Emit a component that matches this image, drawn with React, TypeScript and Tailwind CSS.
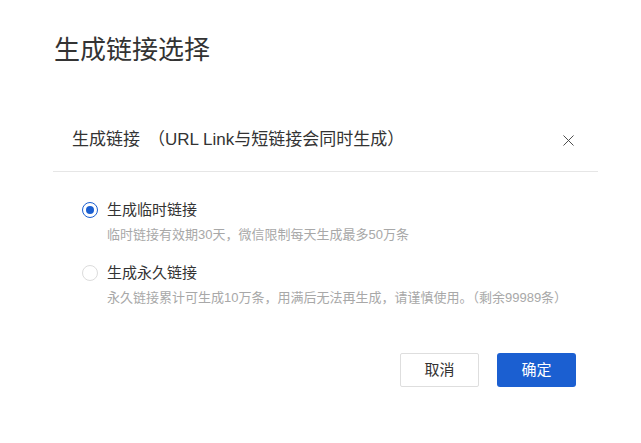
import { X } from "lucide-react";

const font = { fontFamily: '"Liberation Sans", "Noto Sans CJK SC", "Noto Sans", sans-serif' };

const options = [
  {
    label: "生成临时链接",
    desc: "临时链接有效期30天，微信限制每天生成最多50万条",
    checked: true,
  },
  {
    label: "生成永久链接",
    desc: "永久链接累计可生成10万条，用满后无法再生成，请谨慎使用。（剩余99989条）",
    checked: false,
  },
];

const App = () => {
  return (
    <main className="w-[641px] h-[443px] bg-white text-[#333] overflow-hidden" style={font}>
      <h1 className="pl-[54px] pt-[31px] text-[26px] leading-[39px] font-normal">生成链接选择</h1>

      <section className="ml-[53px] w-[545px] mt-[58px]">
        <div className="flex items-center justify-between pl-[19px] pr-[20px] pb-[19px] border-b border-[#e6e6e6]">
          <h2 className="text-[17px] leading-[24px]">
            生成链接<span className="ml-[8px]">（URL Link与短链接会同时生成）</span>
          </h2>
          <X size={19} strokeWidth={1.2} className="text-[#444]" />
        </div>

        <div className="pt-[27px] pl-[29px]">
          {options.map((o, i) => (
            <div key={o.label} className={i > 0 ? "mt-[17px]" : ""}>
              <label className="flex items-center gap-[9px] h-[22px]">
                <span
                  className={`flex items-center justify-center w-[16px] h-[16px] rounded-full border ${
                    o.checked ? "border-[#1b5fd1]" : "border-[#dcdcdc]"
                  }`}
                >
                  {o.checked && <span className="w-[8px] h-[8px] rounded-full bg-[#1b5fd1]" />}
                </span>
                <span className="text-[15px] leading-[22px]">{o.label}</span>
              </label>
              <p className="mt-[4px] pl-[25px] text-[13px] leading-[20px] text-[#a8a8a8]">{o.desc}</p>
            </div>
          ))}
        </div>

        <div className="flex justify-end gap-[18px] pr-[22px] mt-[45px]">
          <button className="w-[79px] h-[34px] border border-[#dedede] rounded-[2px] bg-white text-[15px] text-[#333]">
            取消
          </button>
          <button className="w-[79px] h-[34px] rounded-[3px] bg-[#1b5fd1] text-[15px] text-white">
            确定
          </button>
        </div>
      </section>
    </main>
  );
};

export default App;
